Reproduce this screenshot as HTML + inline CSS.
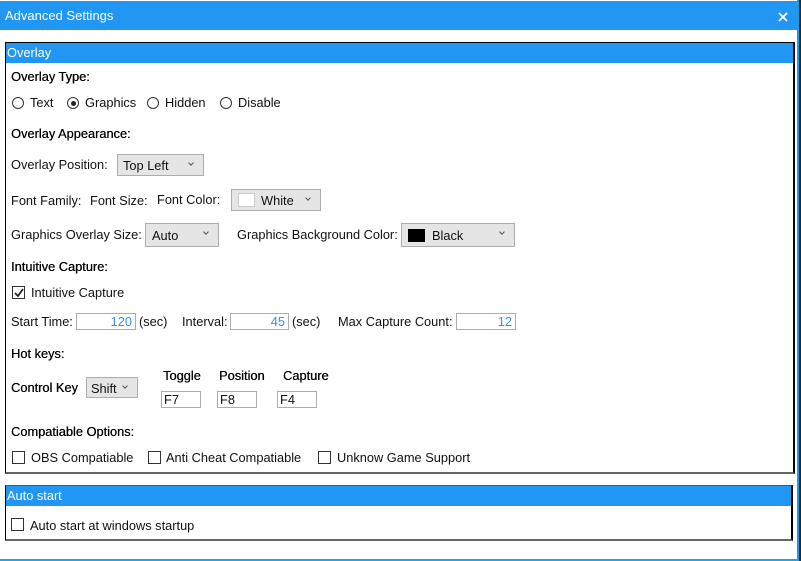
<!DOCTYPE html>
<html><head><meta charset="utf-8"><style>
*{box-sizing:border-box;margin:0;padding:0}
body{width:801px;height:561px;overflow:hidden;background:#1a2a33;position:relative;font-family:"Liberation Sans",sans-serif;font-size:12.8px;color:#111}
.win{position:absolute;left:0;top:0;width:799px;height:561px;background:#fff;border-right:2px solid #1e9be0;border-bottom:2px solid #1ea7e6}
.title{position:absolute;left:0;top:1px;width:797px;height:29px;background:#2196f3;color:#fff;font-size:13px}
.a{position:absolute;white-space:nowrap;line-height:14px}
.h{color:#000;text-shadow:0.3px 0 0 #000}
.grp{position:absolute;border:1px solid #000;border-right-width:2px;border-bottom:2px solid #666}
.hd{position:absolute;left:0;right:0;top:0;height:20px;background:#2196f3;color:#fff;font-size:12.8px;line-height:19px;padding-left:1px}
.cb{position:absolute;background:#e5e5e5;border:1px solid #adadad}
.cb::after{content:"";position:absolute;right:10px;top:6px;width:3px;height:3px;border-right:1px solid #555;border-bottom:1px solid #555;transform:rotate(45deg)}
.in{position:absolute;border:1px solid #abadb3;background:#fff;color:#3a8ee6;text-align:right;padding-right:3px;line-height:15px}
.in2{position:absolute;border:1px solid #abadb3;background:#fff;line-height:15px;padding-left:2px}
.chk{position:absolute;width:13px;height:13px;border:1px solid #333;background:#fff}
.rad{position:absolute;width:12px;height:12px;border:1px solid #333;border-radius:50%;background:#fff}
</style></head><body>
<div class="win">
<div class="title"><span class="a" style="left:5px;top:8px">Advanced Settings</span>
<svg style="position:absolute;left:778px;top:11px" width="10" height="10"><path d="M1 1L9 9M9 1L1 9" stroke="#fff" stroke-width="1.8"/></svg></div>

<div class="grp" style="left:5px;top:42px;width:790px;height:432px">
<div class="hd">Overlay</div></div>

<span class="a h" style="left:11px;top:70px">Overlay Type:</span>
<div class="rad" style="left:12px;top:97px"></div><span class="a" style="left:30px;top:96px">Text</span>
<div class="rad" style="left:67px;top:97px"></div><div style="position:absolute;left:71px;top:101px;width:5px;height:5px;border-radius:50%;background:#222"></div><span class="a" style="left:85px;top:96px">Graphics</span>
<div class="rad" style="left:147px;top:97px"></div><span class="a" style="left:165px;top:96px">Hidden</span>
<div class="rad" style="left:220px;top:97px"></div><span class="a" style="left:238px;top:96px">Disable</span>

<span class="a h" style="left:11px;top:127px">Overlay Appearance:</span>
<span class="a" style="left:11px;top:158px">Overlay Position:</span>
<div class="cb" style="left:117px;top:154px;width:87px;height:22px"><span class="a" style="left:5px;top:4px">Top Left</span></div>

<span class="a" style="left:11px;top:194px">Font Family:</span>
<span class="a" style="left:90px;top:194px">Font Size:</span>
<span class="a" style="left:157px;top:193px">Font Color:</span>
<div class="cb" style="left:231px;top:189px;width:90px;height:22px"><div style="position:absolute;left:6px;top:3px;width:17px;height:14px;background:#fff;border:1px solid #ccc"></div><span class="a" style="left:29px;top:4px">White</span></div>

<span class="a" style="left:11px;top:228px">Graphics Overlay Size:</span>
<div class="cb" style="left:145px;top:223px;width:74px;height:24px"><span class="a" style="left:6px;top:5px">Auto</span></div>
<span class="a" style="left:237px;top:228px">Graphics Background Color:</span>
<div class="cb" style="left:401px;top:223px;width:114px;height:24px"><div style="position:absolute;left:6px;top:5px;width:17px;height:13px;background:#000"></div><span class="a" style="left:30px;top:5px">Black</span></div>

<span class="a h" style="left:11px;top:260px">Intuitive Capture:</span>
<div class="chk" style="left:12px;top:286px"></div>
<svg style="position:absolute;left:13px;top:287px" width="12" height="12"><path d="M2 6L5 9L10 2" stroke="#222" stroke-width="1.8" fill="none"/></svg>
<span class="a" style="left:31px;top:286px">Intuitive Capture</span>

<span class="a" style="left:11px;top:315px">Start Time:</span>
<div class="in" style="left:76px;top:313px;width:60px;height:17px">120</div>
<span class="a" style="left:139px;top:315px">(sec)</span>
<span class="a" style="left:182px;top:315px">Interval:</span>
<div class="in" style="left:230px;top:313px;width:59px;height:17px">45</div>
<span class="a" style="left:292px;top:315px">(sec)</span>
<span class="a" style="left:338px;top:315px">Max Capture Count:</span>
<div class="in" style="left:456px;top:313px;width:60px;height:17px">12</div>

<span class="a h" style="left:11px;top:347px">Hot keys:</span>
<span class="a h" style="left:11px;top:381px">Control Key</span>
<div class="cb" style="left:86px;top:377px;width:52px;height:21px"><span class="a" style="left:4px;top:4px">Shift</span></div>
<span class="a h" style="left:163px;top:369px">Toggle</span>
<span class="a h" style="left:219px;top:369px">Position</span>
<span class="a h" style="left:283px;top:369px">Capture</span>
<div class="in2" style="left:161px;top:391px;width:40px;height:17px">F7</div>
<div class="in2" style="left:217px;top:391px;width:40px;height:17px">F8</div>
<div class="in2" style="left:277px;top:391px;width:40px;height:17px">F4</div>

<span class="a h" style="left:11px;top:425px">Compatiable Options:</span>
<div class="chk" style="left:12px;top:451px"></div><span class="a" style="left:31px;top:451px">OBS Compatiable</span>
<div class="chk" style="left:148px;top:451px"></div><span class="a" style="left:166px;top:451px">Anti Cheat Compatiable</span>
<div class="chk" style="left:318px;top:451px"></div><span class="a" style="left:337px;top:451px">Unknow Game Support</span>

<div class="grp" style="left:5px;top:485px;width:788px;height:56px;border-top-color:#555">
<div class="hd">Auto start</div></div>
<div class="chk" style="left:11px;top:518px"></div><span class="a" style="left:30px;top:519px">Auto start at windows startup</span>
</div>
</body></html>
